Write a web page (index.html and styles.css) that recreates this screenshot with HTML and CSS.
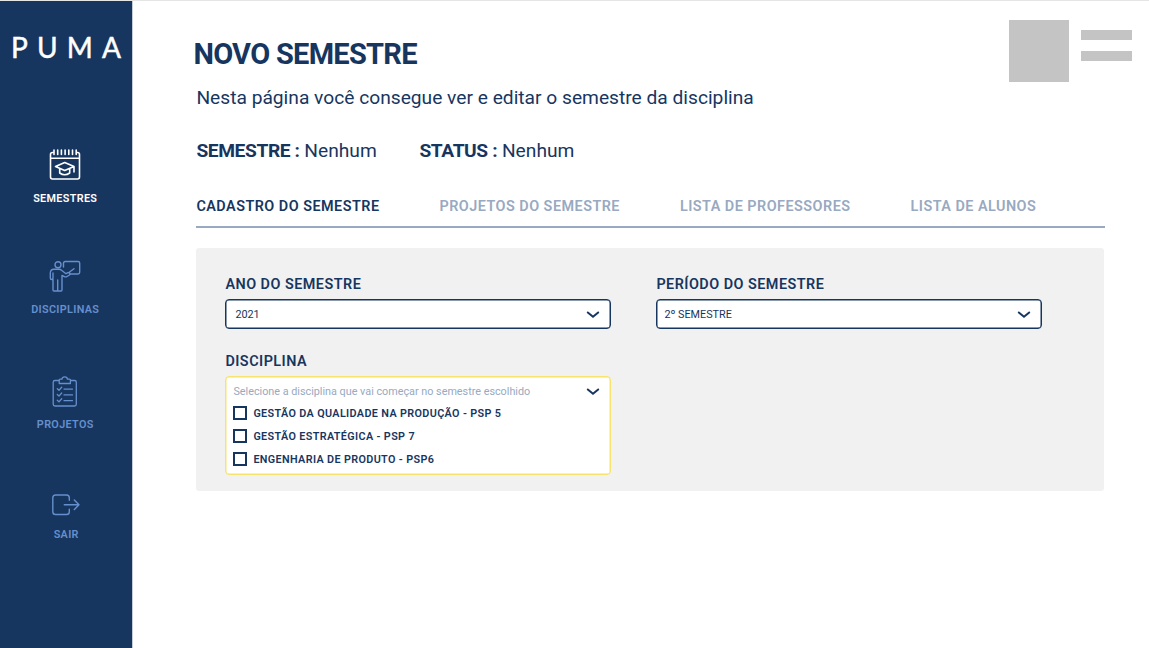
FILE: index.html
```html
<!DOCTYPE html>
<html lang="pt-BR">
<head>
<meta charset="utf-8">
<title>Novo Semestre</title>
<link rel="stylesheet" href="styles.css">
</head>
<body>
<div class="app">
  <aside class="sidebar">
    <div class="logo"><span>P</span><span>U</span><span>M</span><span>A</span></div>
    <nav class="menu">
      <a class="menu-item semestres active">
        <svg width="32" height="32" viewBox="0 0 32 32" fill="none" stroke="currentColor" stroke-width="1.6" stroke-linecap="round" stroke-linejoin="round">
          <path d="M4 3.500H3.400Q1.500 3.500 1.500 5.400V28.100Q1.500 30 3.400 30H28.600Q30.500 30 30.500 28.100V5.400Q30.500 3.500 28.600 3.500H28M1.500 9.300H30.500"/>
          <path d="M5 1V5.500M8.700 1V5.500M12.400 1V5.500M16.100 1V5.500M19.800 1V5.500M23.500 1V5.500M27.200 1V5.500"/>
          <path d="M6.500 17.500L15.700 13.500L25 17.500L15.700 21.500ZM10.700 19.800V24Q15.700 27.500 20.700 24V19.800M25 17.500V23"/>
        </svg>
        <span>SEMESTRES</span>
      </a>
      <a class="menu-item disciplinas">
        <svg width="32" height="32" viewBox="0 0 32 32" fill="none" stroke="currentColor" stroke-width="1.400" stroke-linecap="round" stroke-linejoin="round">
          <circle cx="9" cy="4.700" r="3"/>
          <path d="M14.500 7V3.200Q14.500 1.500 16.200 1.500H29Q30.700 1.500 30.700 3.200V12.300Q30.700 14 29 14H21"/>
          <path d="M4 19.500V30Q4 31 5 31H7.700Q8.700 31 8.700 30V20M8.700 30Q8.700 31 9.700 31H12Q13 31 13 30V15.500L16 16.800Q17 17.100 18 16.500L20.500 15Q21.500 14 20.500 12.800Q20 12.300 19 12.700L17 13.700L12.500 10.300Q11.500 9.300 10 9.300H5Q1.500 9.300 1.300 13V18Q1.300 19.500 2.700 19.500Q4 19.500 4 18V13M19.500 12.700L25 8.700"/>
        </svg>
        <span>DISCIPLINAS</span>
      </a>
      <a class="menu-item projetos">
        <svg width="32" height="32" viewBox="0 0 32 32" fill="none" stroke="currentColor" stroke-width="1.300" stroke-linecap="round" stroke-linejoin="round">
          <path d="M10 4.500H6Q4.200 4.500 4.200 6.300V28.200Q4.200 30 6 30H25.500Q27.300 30 27.300 28.200V6.300Q27.300 4.500 25.500 4.500H21.500"/>
          <path d="M10.200 7.500V4.100Q10.200 3.200 11.200 3.200H13Q13 .8 15.700 .8Q18.400 .8 18.400 3.200H20.500Q21.400 3.200 21.400 4.100V7.500Z"/>
          <path d="M8.300 12.700L10 14.300L12.700 11.200M8.300 18.500L10 20.100L12.700 17M8.300 24.300L10 25.900L12.700 22.800M15 13.100H23.500M15 18.900H23.500M15 24.700H23.500"/>
        </svg>
        <span>PROJETOS</span>
      </a>
      <a class="menu-item sair">
        <svg width="32" height="24" viewBox="0 0 32 24" fill="none" stroke="currentColor" stroke-width="1.400" stroke-linecap="round" stroke-linejoin="round">
          <path d="M19.300 7.300V4.800Q19.300 2 16.500 2H5.600Q2.800 2 2.800 4.800V18.700Q2.800 21.500 5.600 21.500H16.500Q19.300 21.500 19.300 18.700V16.200M14.300 11.800H29M24.300 7L29 11.800L24.300 16.600"/>
        </svg>
        <span>SAIR</span>
      </a>
    </nav>
  </aside>
  <main class="content">
    <header class="header">
      <div class="heading">
        <h1>NOVO SEMESTRE</h1>
        <p class="subtitle">Nesta página você consegue ver e editar o semestre da disciplina</p>
      </div>
      <div class="profile">
        <div class="avatar"></div>
        <div class="lines"><i></i><i></i></div>
      </div>
    </header>
    <div class="summary">
      <p class="sem"><b>SEMESTRE :</b> Nenhum</p>
      <p><b>STATUS :</b> Nenhum</p>
    </div>
    <nav class="tabs">
      <a class="selected">CADASTRO DO SEMESTRE</a>
      <a>PROJETOS DO SEMESTRE</a>
      <a>LISTA DE PROFESSORES</a>
      <a>LISTA DE ALUNOS</a>
    </nav>
    <section class="panel">
      <div class="field">
        <label>ANO DO SEMESTRE</label>
        <div class="select year"><span>2021</span>
          <svg class="chevron" width="14" height="10" viewBox="0 0 14 10"><path d="M1.800 3.500L7 7.800L12.200 3.500"/></svg></div>
      </div>
      <div class="field">
        <label>PERÍODO DO SEMESTRE</label>
        <div class="select"><span>2º SEMESTRE</span>
          <svg class="chevron" width="14" height="10" viewBox="0 0 14 10"><path d="M1.800 3.500L7 7.800L12.200 3.500"/></svg></div>
      </div>
      <div class="field">
        <label>DISCIPLINA</label>
        <div class="dropdown">
          <div class="prompt"><span>Selecione a disciplina que vai começar no semestre escolhido</span>
            <svg class="chevron" width="14" height="10" viewBox="0 0 14 10"><path d="M1.800 3.500L7 7.800L12.200 3.500"/></svg></div>
          <div class="option"><i class="box"></i><span>GESTÃO DA QUALIDADE NA PRODUÇÃO - PSP 5</span></div>
          <div class="option"><i class="box"></i><span>GESTÃO ESTRATÉGICA - PSP 7</span></div>
          <div class="option"><i class="box"></i><span>ENGENHARIA DE PRODUTO - PSP6</span></div>
        </div>
      </div>
    </section>
  </main>
</div>
</body>
</html>
```
FILE: styles.css
```css
* { box-sizing: border-box; margin: 0; padding: 0; }
body { font-family: Roboto, "Liberation Sans", sans-serif; color: #17365f; background: #fff; }
.app { display: flex; height: 648px; border-top: 1px solid #e5e5e5; overflow: hidden; }
.sidebar { width: 132px; flex: none; height: 648px; margin-top: -1px; border-top: 1px solid #a3afbf; background: #17365f; box-shadow: 1px 0 #c5cdd7; color: #668fcd; }
.logo { display: flex; justify-content: space-between; width: 111px; margin: 28px 0 0 11px; font: 28px/36px Lato, sans-serif; color: #fff; -webkit-text-stroke: .5px #fff; }
.logo { width: 110px; }
.menu { display: flex; flex-direction: column; margin-top: 84px; }
.menu-item { display: flex; flex-direction: column; align-items: center; width: 130px; font-size: 10.800px; font-weight: 600; line-height: 14px; letter-spacing: .35px; }
.menu-item svg { display: block; }
.menu-item span { padding-left: .5px; }
.menu-item.active { color: #fff; }
.semestres { gap: 11px; }
.disciplinas { margin-top: 54px; gap: 11px; }
.projetos { margin-top: 59px; gap: 10px; }
.sair { margin-top: 61px; gap: 11px; width: 132px; }
.content { flex: 1; padding-left: 64.400px; }
.header { display: flex; justify-content: space-between; height: 125px; padding-right: 17px; }
.heading { padding-top: 35px; }
h1 { font-size: 29px; line-height: 36px; font-weight: 700; letter-spacing: -.72px; margin-left: -3px; white-space: nowrap; }
.subtitle { margin-top: 13px; font-size: 19.200px; line-height: 26px; white-space: nowrap; }
.profile { display: flex; gap: 12px; padding-top: 19px; }
.avatar { width: 60px; height: 62px; background: #c4c4c4; }
.lines { display: flex; flex-direction: column; gap: 11px; padding-top: 10px; }
.lines i { width: 51px; height: 10px; background: #c4c4c4; }
.summary { display: flex; height: 50px; padding-top: 12px; font-size: 19.200px; line-height: 26px; }
.summary b { font-weight: 700; letter-spacing: -.4px; }
.sem { width: 223px; }
.tabs { display: flex; gap: 60px; width: 909px; height: 52px; padding-top: 22px; border-bottom: 2px solid #98a9c1; color: #98a9c1; font-size: 14.400px; font-weight: 600; line-height: 18px; letter-spacing: .48px; white-space: nowrap; }
.tabs .selected { color: #17365f; }
.panel { display: grid; grid-template-columns: 386px 386px; grid-template-rows: 77px 1fr; column-gap: 45px; width: 908px; height: 243px; margin-top: 20px; padding: 27px 0 0 29px; border-radius: 3px; background: #f1f1f1; }
.field label { display: block; height: 24px; font-size: 14.400px; font-weight: 600; line-height: 20px; letter-spacing: .48px; }
.select { display: flex; align-items: center; justify-content: space-between; height: 30px; padding: 0 10px 0 7px; border: 1.500px solid #17365f; border-radius: 4px; background: #fff; font-size: 10.800px; box-shadow: inset 0 0 0 .5px #17365f; }
.year { padding-left: 9px; }
.chevron { fill: none; stroke: #17365f; stroke-width: 2; stroke-linecap: round; }
.dropdown { height: 99px; padding: 4px 10px 0 7px; border: 1.500px solid #f8e36d; border-radius: 4px; background: #fff; box-shadow: inset 0 0 0 .5px #f8e36d; }
.prompt { display: flex; align-items: center; justify-content: space-between; height: 20px; color: #98a9c1; font-size: 10.800px; }
.option { display: flex; align-items: center; gap: 6px; height: 23px; font-size: 10.800px; font-weight: 600; letter-spacing: .36px; white-space: nowrap; }
.box { width: 14px; height: 14px; border: 2px solid #17365f; }
.option span { padding-top: 1px; }
```
